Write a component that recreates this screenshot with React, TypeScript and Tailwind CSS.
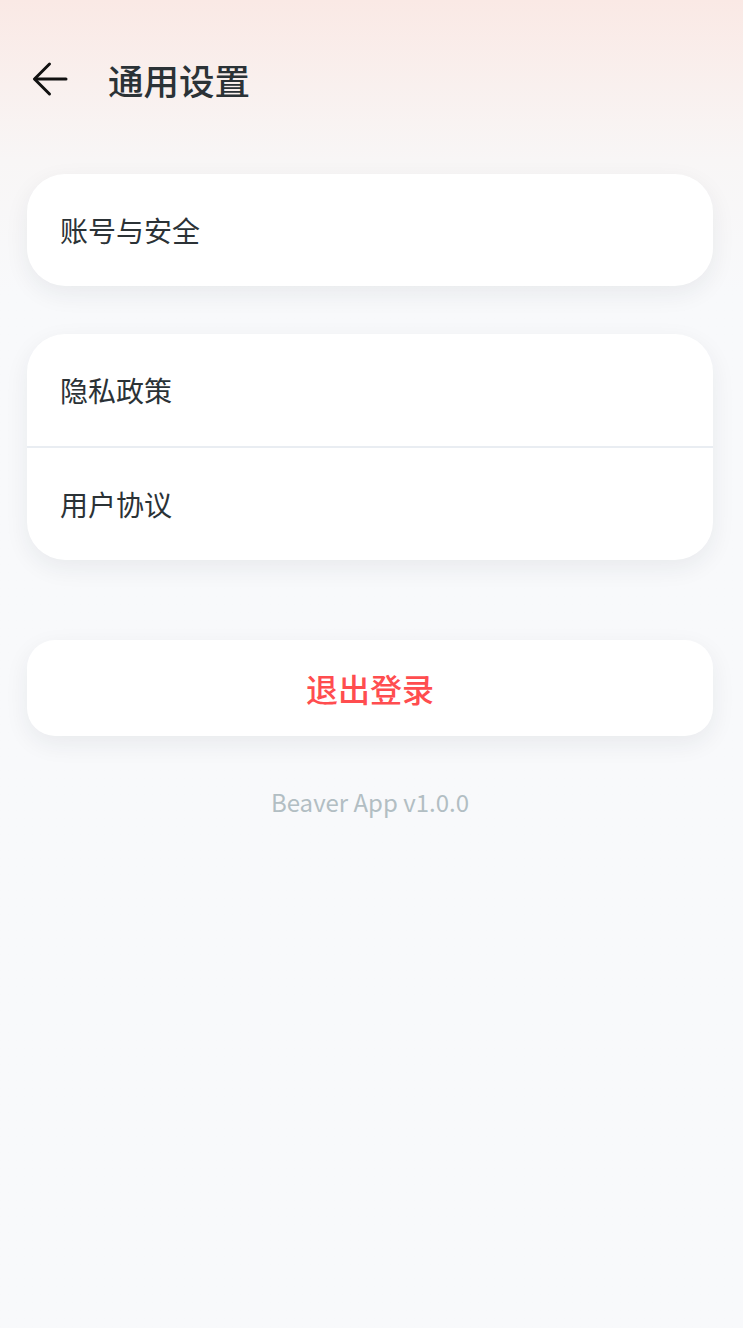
import React from "react";

export default function App() {
  const font = { fontFamily: '"Noto Sans CJK SC", "Noto Sans", sans-serif' };
  return (
    <div
      className="min-h-[1328px] w-full bg-gradient-to-b from-[#fae9e5] via-[#f8f6f6] via-[12%] to-[#f8f9fb] to-[22%] pt-12"
      style={font}
    >
      <div className="flex h-16 items-center">
        <button className="ml-[32px] flex h-9 w-9 items-center justify-center -mt-[3px]">
          <svg width="36" height="36" viewBox="0 0 36 36" fill="none">
            <path d="M34 18H3" stroke="#111" strokeWidth="3" strokeLinecap="round" />
            <path d="M17.5 3L2.5 18L17.5 33" stroke="#111" strokeWidth="3" strokeLinecap="round" strokeLinejoin="round" />
          </svg>
        </button>
        <h1 className="ml-[40px] text-[35.5px] font-medium leading-none text-[#2b3236]">通用设置</h1>
      </div>

      <div className="pl-[27px] pr-[30px] pt-[62px]">
        <div className="flex h-[112px] items-center rounded-[38px] bg-white px-[33px] shadow-[0_8px_24px_rgba(30,40,60,0.07)]">
          <span className="text-[28px] leading-none text-[#2b3236]">账号与安全</span>
        </div>

        <div className="mt-[48px] overflow-hidden rounded-[38px] bg-white shadow-[0_8px_24px_rgba(30,40,60,0.07)]">
          <div className="flex h-[114px] items-center border-b-2 border-[#e9edf2] px-[33px]">
            <span className="text-[28px] leading-none text-[#2b3236]">隐私政策</span>
          </div>
          <div className="flex h-[112px] items-center px-[33px]">
            <span className="text-[28px] leading-none text-[#2b3236]">用户协议</span>
          </div>
        </div>

        <div className="mt-[80px] flex h-[96px] items-center justify-center rounded-[28px] bg-white shadow-[0_8px_24px_rgba(30,40,60,0.07)]">
          <span className="text-[32px] font-medium leading-none text-[#ff4d4f]">退出登录</span>
        </div>

        <div className="mt-[50px] text-center text-[24px] leading-[32px] text-[#b2bec3]">Beaver App v1.0.0</div>
      </div>
    </div>
  );
}
